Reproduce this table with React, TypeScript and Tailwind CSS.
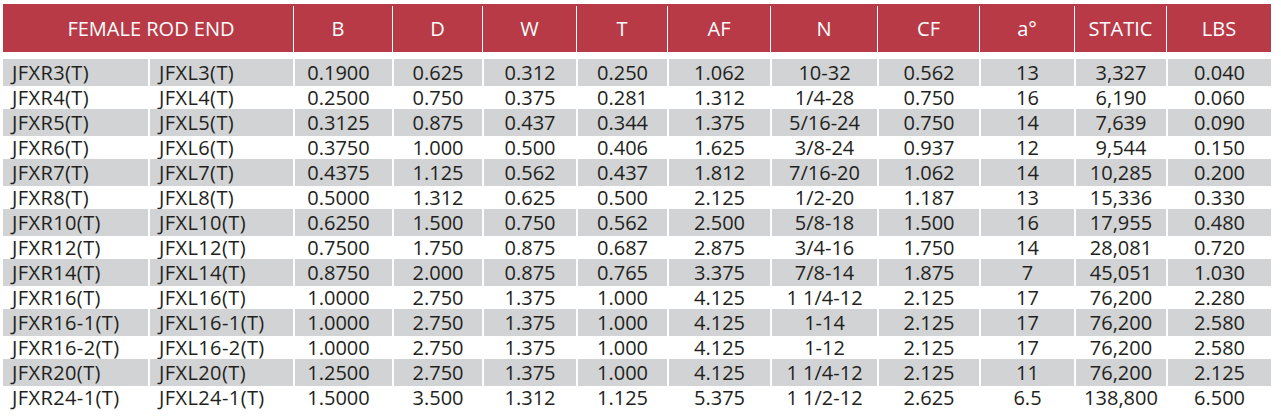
import React from "react";

const widthClasses = [
  "w-[145px]",
  "w-[145px]",
  "w-[99px] pr-[10px]",
  "w-[90px]",
  "w-[94px]",
  "w-[91px]",
  "w-[103px]",
  "w-[107px]",
  "w-[102px]",
  "w-[95px]",
  "w-[92px]",
  "w-[105px]",
];

const headers = ["B", "D", "W", "T", "AF", "N", "CF", "a°", "STATIC", "LBS"];
const headerWidths = [
  "w-[99px] pr-[10px]",
  "w-[90px]",
  "w-[94px]",
  "w-[91px]",
  "w-[103px]",
  "w-[107px]",
  "w-[102px]",
  "w-[95px]",
  "w-[92px]",
  "w-[105px]",
];

const rows: string[][] = [
  ["JFXR3(T)", "JFXL3(T)", "0.1900", "0.625", "0.312", "0.250", "1.062", "10-32", "0.562", "13", "3,327", "0.040"],
  ["JFXR4(T)", "JFXL4(T)", "0.2500", "0.750", "0.375", "0.281", "1.312", "1/4-28", "0.750", "16", "6,190", "0.060"],
  ["JFXR5(T)", "JFXL5(T)", "0.3125", "0.875", "0.437", "0.344", "1.375", "5/16-24", "0.750", "14", "7,639", "0.090"],
  ["JFXR6(T)", "JFXL6(T)", "0.3750", "1.000", "0.500", "0.406", "1.625", "3/8-24", "0.937", "12", "9,544", "0.150"],
  ["JFXR7(T)", "JFXL7(T)", "0.4375", "1.125", "0.562", "0.437", "1.812", "7/16-20", "1.062", "14", "10,285", "0.200"],
  ["JFXR8(T)", "JFXL8(T)", "0.5000", "1.312", "0.625", "0.500", "2.125", "1/2-20", "1.187", "13", "15,336", "0.330"],
  ["JFXR10(T)", "JFXL10(T)", "0.6250", "1.500", "0.750", "0.562", "2.500", "5/8-18", "1.500", "16", "17,955", "0.480"],
  ["JFXR12(T)", "JFXL12(T)", "0.7500", "1.750", "0.875", "0.687", "2.875", "3/4-16", "1.750", "14", "28,081", "0.720"],
  ["JFXR14(T)", "JFXL14(T)", "0.8750", "2.000", "0.875", "0.765", "3.375", "7/8-14", "1.875", "7", "45,051", "1.030"],
  ["JFXR16(T)", "JFXL16(T)", "1.0000", "2.750", "1.375", "1.000", "4.125", "1 1/4-12", "2.125", "17", "76,200", "2.280"],
  ["JFXR16-1(T)", "JFXL16-1(T)", "1.0000", "2.750", "1.375", "1.000", "4.125", "1-14", "2.125", "17", "76,200", "2.580"],
  ["JFXR16-2(T)", "JFXL16-2(T)", "1.0000", "2.750", "1.375", "1.000", "4.125", "1-12", "2.125", "17", "76,200", "2.580"],
  ["JFXR20(T)", "JFXL20(T)", "1.2500", "2.750", "1.375", "1.000", "4.125", "1 1/4-12", "2.125", "11", "76,200", "2.125"],
  ["JFXR24-1(T)", "JFXL24-1(T)", "1.5000", "3.500", "1.312", "1.125", "5.375", "1 1/2-12", "2.625", "6.5", "138,800", "6.500"],
];

export default function App() {
  return (
    <div
      className="w-[1281px] h-[416px] bg-white pt-[4px] pl-[3px] overflow-hidden"
      style={{ fontFamily: '"Open Sans", "Liberation Sans", sans-serif' }}
    >
      <div className="w-[1268px]">
        <div className="flex h-[48px] bg-[#b83a46] pt-[2px] text-white text-[20px]">
          <div className="w-[290px] flex items-center justify-center pl-[6px]">FEMALE ROD END</div>
          {headers.map((h, i) => (
            <div
              key={h}
              className={`${headerWidths[i]} flex items-center justify-center border-l border-white`}
            >
              {h}
            </div>
          ))}
        </div>
        <div className="mt-[7px] flex flex-col text-[20px] text-[#231f20]">
          {rows.map((r, ri) => {
            const gray = ri % 2 === 0;
            return (
              <div key={ri} className={`flex ${gray ? "h-[27px] bg-[#d1d3d4]" : "h-[23px] bg-white"}`}>
                {r.map((c, ci) => (
                  <div
                    key={ci}
                    className={`${widthClasses[ci]} flex items-center leading-none whitespace-nowrap ${
                      ci < 2 ? "justify-start pl-[9px] tracking-[0.4px]" : "justify-center"
                    } ${ci > 0 ? "border-l-2 border-white" : ""}`}
                  >
                    {c}
                  </div>
                ))}
              </div>
            );
          })}
        </div>
      </div>
    </div>
  );
}
